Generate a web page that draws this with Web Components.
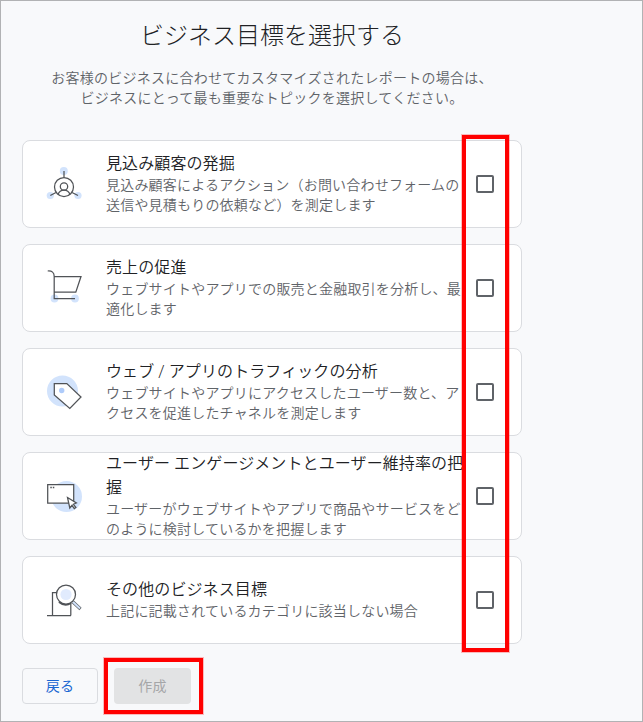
<!DOCTYPE html>
<html lang="ja"><head><meta charset="utf-8"><title>ビジネス目標を選択する</title>
<style>
html,body{margin:0;height:100%;overflow:hidden}
body{font-family:Roboto,"Noto Sans CJK JP",sans-serif;background:#f8f9fb;color:#202124}
</style></head><body>
<goal-page></goal-page>
<script>
const define = (name, html) => {
  const t = document.createElement('template');
  t.innerHTML = html;
  customElements.define(name, class extends HTMLElement {
    constructor() {
      super();
      this.attachShadow({mode: 'open'}).append(t.content.cloneNode(true));
    }
  });
};

const icons = {
  leads: `<g fill="#d2e3fc" stroke="none"><circle cx="33.8" cy="17" r="4"/><circle cx="20.3" cy="41.5" r="3.6"/><circle cx="48" cy="41.5" r="3.6"/></g>
    <circle cx="34" cy="33" r="9.5"/><circle cx="34" cy="32.5" r="3.7"/><path d="M28 40.5q1.5-4.300 6-4.300t6 4.300M34 17v6.500M26 38.500l-5.700 3M42 38.500l6 3"/>`,
  sales: `<g fill="#d2e3fc" stroke="none"><circle cx="24.500" cy="40.500" r="3.900"/><circle cx="45" cy="40.500" r="3.900"/></g>
    <path d="M17.700 13q6.500-.5 6.500 5.500v22H45M24.500 18.500H51l-5.200 15.700H24.500"/>`,
  traffic: `<circle cx="32.500" cy="29" r="15.500" fill="#d2e3fc" stroke="none"/><path fill="#fff" d="M24.300 21.500h12.500L51 35 39.800 46.500 24.300 33z"/><circle cx="31.700" cy="28.500" r="2.700" fill="#aecbfa" stroke="none"/>`,
  engage: `<circle cx="36.500" cy="30.500" r="15.500" fill="#d2e3fc" stroke="none"/><path fill="#fff" d="M17.700 18.700h26v18.500h-26z"/><path d="M20.300 21.500h1.500M22.800 21.500h1.500" stroke-width="1.500"/><path fill="#fff" d="M37.500 31.500l2.300 10.500 2.200-2.700 2.300 3.400 1.600-1.200-2.500-3.200 3-1.300z"/>`,
  other: `<path d="M17 45.500h24M22.500 45.500v-23H31M40.800 45.500V33"/><path d="M29 32q6 5 12 1" stroke-width="2"/><path d="M43 32l7.500 7" stroke="#5f6368" stroke-width="3.200"/><path d="M43 32l7 6.500" stroke="#d2e3fc" stroke-width="1.800"/><circle cx="36" cy="24.500" r="9.500" fill="#fff"/><circle cx="36" cy="24.500" r="5.600" fill="#e1ebfd" stroke="none"/>`
};
customElements.define('goal-icon', class extends HTMLElement {
  constructor() {
    super();
    this.attachShadow({mode: 'open'});
  }
  connectedCallback() {
    this.shadowRoot.innerHTML = `<style>:host{display:block;width:70px;height:60px}svg{display:block}</style>
      <svg width="70" height="60" viewBox="0 0 70 60" fill="none" stroke="#505357" stroke-width="1.250">${icons[this.getAttribute('name')]}</svg>`;
  }
});

define('goal-check', `<style>:host{display:block;box-sizing:border-box;width:18px;height:18px;border:2px solid #5f6368;border-radius:2px}</style>`);

define('goal-card', `<style>
:host{display:flex;align-items:center;box-sizing:border-box;height:88px;background:#fff;border:1px solid #dadce0;border-radius:8px;padding:0 27px 0 7px}
.text{width:360px;margin-left:6px}
.title{font-size:16px;line-height:24px;letter-spacing:.1px;color:#202124;font-weight:350}
.desc{font-size:14px;line-height:20px;letter-spacing:.2px;color:#5f6368;font-weight:350;margin:-1px 0 1px}
goal-check{margin-left:auto}
</style><slot name="icon"></slot><div class="text"><div class="title"><slot name="title"></slot></div><div class="desc"><slot></slot></div></div><goal-check></goal-check>`);

define('goal-button', `<style>
:host{display:flex;align-items:center;justify-content:center;box-sizing:border-box;width:76px;height:36px;border:1px solid #dadce0;border-radius:4px;padding-bottom:2px;font-size:14px;letter-spacing:.25px;color:#1967d2}
:host([disabled]){width:77px;border:0;background:#e2e3e4;color:#a5a6a8}
</style><slot></slot>`);

define('red-frame', `<style>:host{display:block;position:absolute;box-sizing:border-box;border:4px solid #f00;outline:1px solid rgba(255,0,0,.25);pointer-events:none}</style>`);

define('goal-page', `<style>
:host{display:block;position:relative;box-sizing:border-box;width:643px;height:722px;border:1px solid #b1b2b4;padding:17px 0 0 21px}
main{width:500px}
h1{margin:0;font-size:24px;line-height:36px;font-weight:300;text-align:center}
p{margin:14px 0 0;font-size:14px;line-height:20px;letter-spacing:.25px;text-align:center;color:#5f6368;font-weight:350}
p span{display:block}
.list{display:grid;gap:16px;margin-top:32px}
.actions{display:flex;gap:16px;margin-top:24px}
.f1{left:461px;top:134px;width:47px;height:517px}
.f2{left:103px;top:657px;width:99px;height:56px}
</style>
<main>
<h1>ビジネス目標を選択する</h1>
<p><span>お客様のビジネスに合わせてカスタマイズされたレポートの場合は、</span><span>ビジネスにとって最も重要なトピックを選択してください。</span></p>
<div class="list">
<goal-card><goal-icon slot="icon" name="leads"></goal-icon><span slot="title">見込み顧客の発掘</span>見込み顧客によるアクション（お問い合わせフォームの送信や見積もりの依頼など）を測定します</goal-card>
<goal-card><goal-icon slot="icon" name="sales"></goal-icon><span slot="title">売上の促進</span>ウェブサイトやアプリでの販売と金融取引を分析し、最適化します</goal-card>
<goal-card><goal-icon slot="icon" name="traffic"></goal-icon><span slot="title">ウェブ / アプリのトラフィックの分析</span>ウェブサイトやアプリにアクセスしたユーザー数と、アクセスを促進したチャネルを測定します</goal-card>
<goal-card><goal-icon slot="icon" name="engage"></goal-icon><span slot="title">ユーザー エンゲージメントとユーザー維持率の把握</span>ユーザーがウェブサイトやアプリで商品やサービスをどのように検討しているかを把握します</goal-card>
<goal-card><goal-icon slot="icon" name="other"></goal-icon><span slot="title">その他のビジネス目標</span>上記に記載されているカテゴリに該当しない場合</goal-card>
</div>
<div class="actions"><goal-button>戻る</goal-button><goal-button disabled>作成</goal-button></div>
</main>
<red-frame class="f1"></red-frame><red-frame class="f2"></red-frame>`);
</script>
</body></html>
